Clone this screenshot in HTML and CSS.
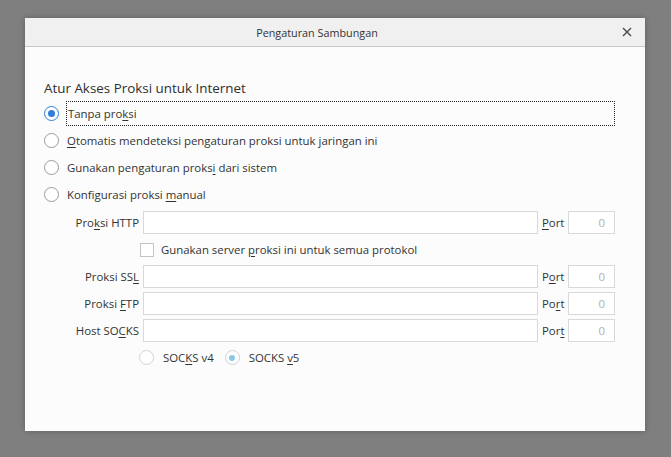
FILE: index.html
```html
<!DOCTYPE html>
<html lang="id">
<head>
<meta charset="utf-8">
<title>Pengaturan Sambungan</title>
<link rel="stylesheet" href="styles.css">
</head>
<body>
<div class="dialog">
  <div class="titlebar">
    <div class="title">Pengaturan Sambungan</div>
    <div class="close">
      <svg width="10" height="10" viewBox="0 0 10 10"><path d="M1 1 L9 9 M9 1 L1 9" stroke="#444" stroke-width="1.3" fill="none"/></svg>
    </div>
  </div>
  <div class="content">
    <div class="heading">Atur Akses Proksi untuk Internet</div>
    <div class="radio-row">
      <span class="radio checked"></span>
      <span class="label focus">Tanpa pro<u>k</u>si</span>
    </div>
    <div class="radio-row">
      <span class="radio"></span>
      <span class="label"><u>O</u>tomatis mendeteksi pengaturan proksi untuk jaringan ini</span>
    </div>
    <div class="radio-row">
      <span class="radio"></span>
      <span class="label">Gunakan pengaturan proks<u>i</u> dari sistem</span>
    </div>
    <div class="radio-row">
      <span class="radio"></span>
      <span class="label">Konfigurasi proksi <u>m</u>anual</span>
    </div>
    <div class="manual">
      <div class="flabel">Pro<u>k</u>si HTTP</div>
      <div class="input"></div>
      <div class="plabel"><u>P</u>ort</div>
      <div class="input port">0</div>

      <div class="check-row">
        <span class="checkbox"></span>
        <span>Gunakan server <u>p</u>roksi ini untuk semua protokol</span>
      </div>

      <div class="flabel">Proksi SS<u>L</u></div>
      <div class="input"></div>
      <div class="plabel">P<u>o</u>rt</div>
      <div class="input port">0</div>

      <div class="flabel">Proksi <u>F</u>TP</div>
      <div class="input"></div>
      <div class="plabel">Po<u>r</u>t</div>
      <div class="input port">0</div>

      <div class="flabel">Host SO<u>C</u>KS</div>
      <div class="input"></div>
      <div class="plabel">Por<u>t</u></div>
      <div class="input port">0</div>

      <div class="socks-row">
        <span class="radio disabled"></span>
        <span class="slabel">SOC<u>K</u>S v4</span>
        <span class="radio disabled checked-dis"></span>
        <span class="slabel">SOCKS <u>v</u>5</span>
      </div>
    </div>
  </div>
</div>
</body>
</html>
```

FILE: styles.css
```css
html, body {
  margin: 0;
  padding: 0;
}
body {
  background: #7f7f7f;
  width: 671px;
  height: 457px;
  overflow: hidden;
  font-family: "Open Sans", "Noto Sans", sans-serif;
  font-size: 11.4px;
  color: #333;
}
.dialog {
  margin: 18px 0 0 25px;
  width: 620px;
  height: 413px;
  background: #fcfcfc;
  box-shadow: 0 0 6px rgba(0,0,0,0.25);
  display: flex;
  flex-direction: column;
}
.titlebar {
  height: 28px;
  background: #f0f0f0;
  border-bottom: 1px solid #c8c8c8;
  display: flex;
  align-items: center;
}
.title {
  flex: 1;
  text-align: center;
  color: #333;
  font-size: 10.8px;
}
.close {
  width: 36px;
  display: flex;
  justify-content: center;
  align-items: center;
}
.close svg { display: block; }
.content {
  padding: 32px 0 0 19px;
  display: flex;
  flex-direction: column;
}
.heading {
  font-size: 13.4px;
  line-height: 18px;
  color: #2e2e2e;
  margin-bottom: 4px;
}
.radio-row {
  height: 25px;
  margin-bottom: 2px;
  display: flex;
  align-items: center;
}
.radio {
  width: 15px;
  height: 15px;
  box-sizing: border-box;
  border: 1px solid #9a9a9a;
  border-radius: 50%;
  background: #fff;
  position: relative;
  flex: none;
}
.radio.checked {
  border: 1.5px solid #2f7fd8;
}
.radio.checked::after {
  content: "";
  position: absolute;
  left: 2.5px;
  top: 2.5px;
  width: 7px;
  height: 7px;
  border-radius: 50%;
  background: #2f7fd8;
}
.radio.disabled {
  border-color: #d2d2d2;
}
.radio.checked-dis::after {
  content: "";
  position: absolute;
  left: 3.5px;
  top: 3.5px;
  width: 6px;
  height: 6px;
  border-radius: 50%;
  background: #90c6e6;
}
.label {
  margin-left: 7px;
  height: 25px;
  line-height: 25px;
  padding-left: 1px;
}
.label.focus {
  margin-left: 7px;
  padding-left: 1px;
  width: 549px;
  box-sizing: border-box;
  border: 1px dotted #222;
  line-height: 23px;
}
u { text-decoration: underline; text-underline-offset: 2px; }
.manual {
  margin-left: 16px;
  display: grid;
  grid-template-columns: 79px 395px 23px 46px;
  column-gap: 4px;
  row-gap: 4px;
  grid-auto-rows: 23px;
  margin-top: 2px;
}
.flabel {
  text-align: right;
  line-height: 23px;
  white-space: nowrap;
}
.plabel {
  line-height: 23px;
  white-space: nowrap;
}
.input {
  border: 1px solid #d9d9d9;
  background: #fff;
  box-sizing: border-box;
  height: 23px;
}
.input.port {
  color: #b0b0b0;
  text-align: right;
  padding-right: 9px;
  line-height: 21px;
  margin-left: -1px;
}
.check-row {
  grid-column: 2 / 5;
  display: flex;
  align-items: center;
  margin-left: -3px;
}
.checkbox {
  width: 14px;
  height: 14px;
  box-sizing: border-box;
  border: 1px solid #c4c4c4;
  background: #fff;
  margin-right: 7px;
}
.socks-row {
  grid-column: 2 / 5;
  display: flex;
  align-items: center;
  margin-left: -4px;
}
.slabel {
  margin-left: 9px;
  margin-right: 11px;
}
```
